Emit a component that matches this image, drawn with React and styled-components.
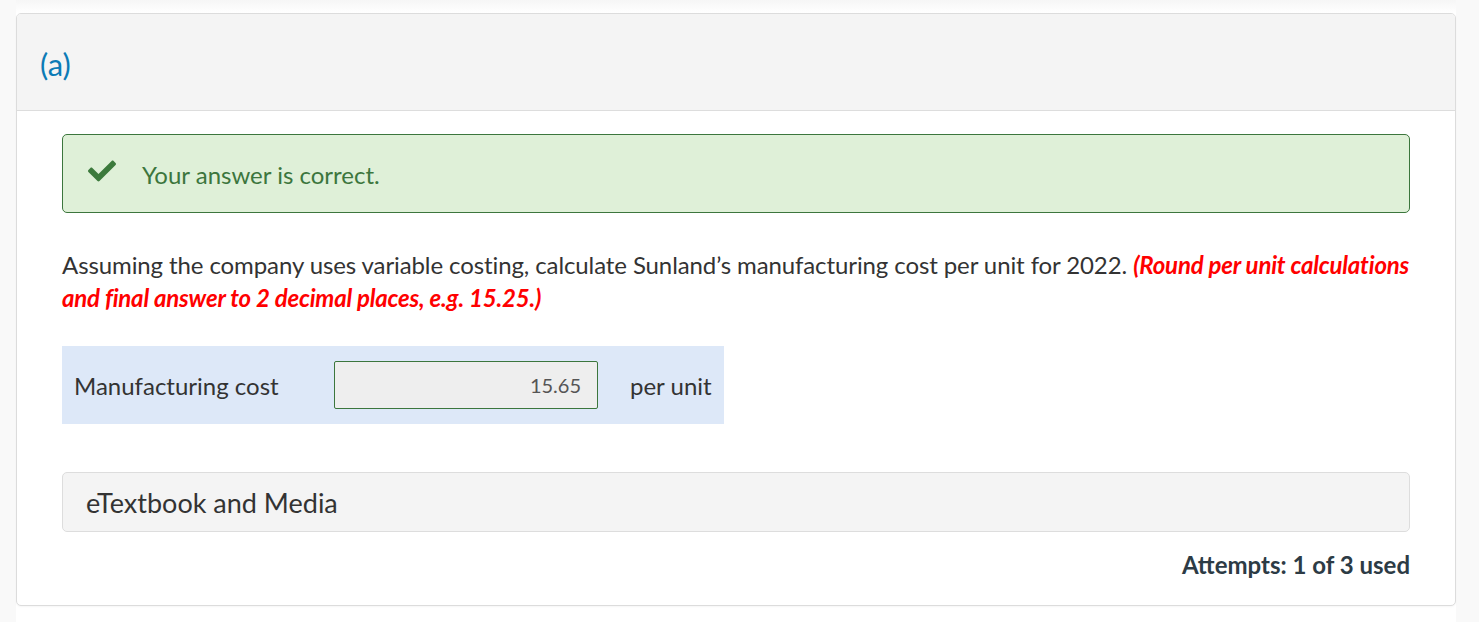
import React from "react";
import styled, { createGlobalStyle } from "styled-components";
import { FaCheck } from "react-icons/fa";

const Global = createGlobalStyle`
  html, body { margin: 0; padding: 0; }
  body {
    background: #f9f9f9;
    font-family: Lato, "Open Sans", "Liberation Sans", sans-serif;
    color: #333;
  }
`;

const Page = styled.div`
  width: 1440px;
  margin-left: 16px;
  padding-top: 13px;
  padding-bottom: 17px;
  background: linear-gradient(to bottom, #f6f6f6 0px, #ffffff 13px, #ffffff 100%);
  min-height: 622px;
  box-sizing: border-box;
`;

const Card = styled.section`
  border: 1px solid #dcdcdc;
  border-radius: 5px;
  background: #fff;
  box-shadow: 0 1px 2px rgba(0, 0, 0, 0.04);
  overflow: hidden;
`;

const Header = styled.header`
  height: 96px;
  background: #f4f4f4;
  border-bottom: 1px solid #dddddd;
  display: flex;
  align-items: center;
  padding-left: 23px;
`;

const PartLabel = styled.h2`
  margin: 0;
  font-weight: 400;
  font-size: 31px;
  color: #0c7bb6;
  position: relative;
  top: 2px;
`;

const Body = styled.div`
  padding: 23px 45px 26px 45px;
  display: flex;
  flex-direction: column;
`;

const Alert = styled.div`
  height: 77px;
  display: flex;
  align-items: center;
  gap: 26px;
  padding-left: 25px;
  background: #dff0d8;
  border: 1px solid #3c763d;
  border-radius: 5px;
  color: #3c763d;
  font-size: 24px;
`;

const CheckIcon = styled(FaCheck)`
  width: 28px;
  height: 28px;
  color: #3c7a3c;
  position: relative;
  top: -3px;
`;

const AlertText = styled.span`
  position: relative;
  top: 1px;
`;

const Question = styled.p`
  margin: 35px 0 0 0;
  font-size: 24px;
  line-height: 33px;
  color: #333;
  letter-spacing: -0.1px;
`;

const Hint = styled.em`
  color: #ff0000;
  font-weight: 700;
  letter-spacing: -0.2px;
`;

const AnswerRow = styled.div`
  align-self: flex-start;
  margin-top: 32px;
  display: flex;
  align-items: center;
  padding: 15px 12px 15px 12px;
  background: #dde8f8;
`;

const FieldLabel = styled.span`
  width: 260px;
  font-size: 24px;
  color: #333;
`;

const AnswerInput = styled.div`
  width: 262px;
  height: 46px;
  box-sizing: content-box;
  border: 1px solid #3c763d;
  border-radius: 2px;
  background: #eeeeee;
  display: flex;
  align-items: center;
  justify-content: flex-end;
  font-size: 20px;
  color: #555;
  & > span { padding-right: 16px; }
`;

const Unit = styled.span`
  margin-left: 32px;
  font-size: 24px;
  color: #333;
`;

const Media = styled.div`
  margin-top: 48px;
  height: 58px;
  display: flex;
  align-items: center;
  padding-left: 23px;
  background: #f4f4f4;
  border: 1px solid #dddddd;
  border-radius: 5px;
  font-size: 27px;
  color: #333;
`;

const Attempts = styled.div`
  margin-top: 18px;
  text-align: right;
  font-size: 24px;
  font-weight: 700;
  color: #2d3b45;
`;

export default function App() {
  return (
    <>
      <Global />
      <Page>
        <Card>
          <Header>
            <PartLabel>(a)</PartLabel>
          </Header>
          <Body>
            <Alert>
              <CheckIcon />
              <AlertText>Your answer is correct.</AlertText>
            </Alert>
            <Question>
              Assuming the company uses variable costing, calculate Sunland’s manufacturing cost per unit for 2022.{" "}
              <Hint>(Round per unit calculations and final answer to 2 decimal places, e.g. 15.25.)</Hint>
            </Question>
            <AnswerRow>
              <FieldLabel>Manufacturing cost</FieldLabel>
              <AnswerInput>
                <span>15.65</span>
              </AnswerInput>
              <Unit>per unit</Unit>
            </AnswerRow>
            <Media>eTextbook and Media</Media>
            <Attempts>Attempts: 1 of 3 used</Attempts>
          </Body>
        </Card>
      </Page>
    </>
  );
}
